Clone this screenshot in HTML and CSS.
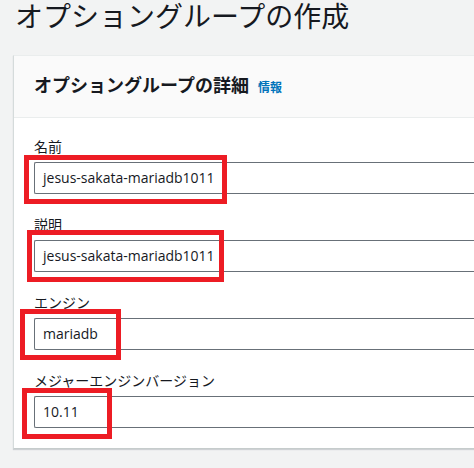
FILE: index.html
```html
<!DOCTYPE html>
<html lang="ja">
<head>
    <meta charset="UTF-8">
    <meta name="viewport" content="width=device-width, initial-scale=1.0">
    <title>オプショングループの作成</title>
    <link rel="stylesheet" href="styles.css">
</head>
<body>
    <h1 class="page-title">オプショングループの作成</h1>

    <div class="card">
        <div class="card-header">
            <h2>オプショングループの詳細</h2>
            <a class="info-link" href="#">情報</a>
        </div>
        <div class="card-body">
            <div class="field">
                <label>名前</label>
                <div class="input mark mark-name">jesus-sakata-mariadb1011</div>
            </div>
            <div class="field">
                <label>説明</label>
                <div class="input mark mark-desc">jesus-sakata-mariadb1011</div>
            </div>
            <div class="field">
                <label>エンジン</label>
                <div class="input mark mark-engine">mariadb</div>
            </div>
            <div class="field">
                <label>メジャーエンジンバージョン</label>
                <div class="input mark mark-version">10.11</div>
            </div>
        </div>
    </div>
</body>
</html>
```

FILE: styles.css
```css
body {
    font-family: 'Open Sans', 'Noto Sans CJK JP', sans-serif;
    background-color: #f2f3f3;
    color: #16191f;
    margin: 0;
    width: 474px;
    height: 468px;
    overflow: hidden;
}

.page-title {
    margin: 0;
    padding: 0 0 0 15px;
    height: 55px;
    font-size: 28px;
    font-weight: 400;
    line-height: 32px;
}

.card {
    margin-left: 13px;
    width: 700px;
    background-color: #ffffff;
    border-left: 1px solid #d5dbdb;
    border-top: 1px solid #eaeded;
    border-bottom: 1px solid #c6cccc;
    box-shadow: 0 1px 1px rgba(0, 22, 43, 0.15);
}

.card-header {
    display: flex;
    align-items: baseline;
    height: 62px;
    box-sizing: border-box;
    padding: 17px 20px 0;
    background-color: #fafafa;
    border-bottom: 1px solid #eaeded;
}

.card-header h2 {
    margin: 0;
    font-size: 18px;
    font-weight: 700;
    line-height: 24px;
}

.info-link {
    margin-left: 9px;
    font-size: 12px;
    font-weight: 700;
    color: #0073bb;
    text-decoration: none;
}

.card-body {
    padding: 21px 20px 20px;
    display: flex;
    flex-direction: column;
    gap: 23px;
}

.field label {
    display: block;
    margin-bottom: 7px;
    font-size: 14px;
    line-height: 16px;
}

.input {
    height: 32px;
    box-sizing: border-box;
    border: 1px solid #687078;
    border-right: none;
    border-radius: 2px 0 0 2px;
    padding: 0 8px;
    font-size: 14px;
    line-height: 30px;
}

/* red annotation boxes drawn over the inputs */
.mark {
    position: relative;
}

.mark::after {
    content: '';
    position: absolute;
    border: 5px solid #ed1c24;
}

.mark-name::after {
    left: -11px;
    top: -8px;
    width: 193px;
    height: 39px;
}

.mark-desc::after {
    left: -8px;
    top: -11px;
    width: 187px;
    height: 42px;
}

.mark-engine::after {
    left: -15px;
    top: -10px;
    width: 91px;
    height: 41px;
}

.mark-version::after {
    left: -13px;
    top: -9px;
    width: 80px;
    height: 41px;
}
```
